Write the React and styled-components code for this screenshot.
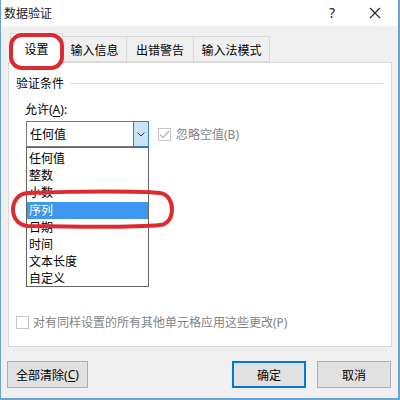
import React from "react";
import styled, { createGlobalStyle } from "styled-components";

const GlobalStyle = createGlobalStyle`
  html, body { margin: 0; padding: 0; background: #ffffff; }
  body { font-family: "Noto Sans", "Noto Sans CJK SC", sans-serif; }
  * { box-sizing: border-box; }
`;

const Window = styled.div`
  position: relative;
  width: 400px;
  height: 400px;
  background: #f0f0f0;
  border-left: 1px solid #6aa3d6;
  border-right: 2px solid #6aa3d6;
  border-bottom: 2px solid #6aa3d6;
  display: flex;
  flex-direction: column;
  color: #000;
  font-size: 12px;
`;

const TitleBar = styled.div`
  height: 26px;
  background: #ffffff;
  display: flex;
  align-items: center;
  padding-left: 3px;
`;

const Title = styled.div`
  flex: 1;
  font-size: 12px;
  color: #1a1a1a;
`;

const TitleButton = styled.div`
  width: ${(p) => p.$w}px;
  text-align: center;
  font-size: ${(p) => p.$size}px;
  color: #222;
  line-height: 26px;
  display: flex;
  align-items: center;
  justify-content: center;
`;

const TabRow = styled.div`
  display: flex;
  align-items: flex-end;
  margin-top: 7px;
  padding-left: 9px;
  height: 29px;
`;

const Tab = styled.div`
  width: ${(p) => p.$w}px;
  height: ${(p) => (p.$active ? 30 : 26)}px;
  background: ${(p) => (p.$active ? "#ffffff" : "#f0f0f0")};
  border: 1px solid #d9d9d9;
  border-bottom: ${(p) => (p.$active ? "none" : "1px solid #d9d9d9")};
  margin-left: ${(p) => (p.$first ? 0 : -1)}px;
  margin-bottom: ${(p) => (p.$active ? -1 : 0)}px;
  position: relative;
  z-index: ${(p) => (p.$active ? 2 : 1)};
  display: flex;
  align-items: center;
  justify-content: center;
  font-size: 12px;
  padding-top: ${(p) => (p.$active ? 0 : 1)}px;
`;

const Panel = styled.div`
  position: relative;
  margin: 0 6px 0 7px;
  height: 285px;
  background: #ffffff;
  border: 1px solid #d9d9d9;
  display: flex;
  flex-direction: column;
  padding: 10px 7px 0 7px;
`;

const GroupHeader = styled.div`
  display: flex;
  align-items: center;
  gap: 6px;
  height: 20px;
`;

const GroupLine = styled.div`
  flex: 1;
  height: 1px;
  background: #dcdcdc;
`;

const Label = styled.div`
  margin: 7px 0 0 9px;
  height: 20px;
  line-height: 20px;
`;

const Mn = styled.span`
  text-decoration: underline;
  text-underline-offset: 2px;
`;

const ComboRow = styled.div`
  display: flex;
  align-items: center;
  gap: 9px;
  margin: 1px 0 0 10px;
  position: relative;
`;

const Combo = styled.div`
  width: 123px;
  height: 26px;
  border: 1px solid #7a7a7a;
  background: #fff;
  display: flex;
  align-items: stretch;
`;

const ComboText = styled.div`
  flex: 1;
  padding-left: 3px;
  display: flex;
  align-items: center;
`;

const DropButton = styled.div`
  width: 16px;
  margin: -1px -1px -1px 0;
  background: #cce4f7;
  border: 1px solid #3c7fb1;
  display: flex;
  align-items: center;
  justify-content: center;
`;

const Check = styled.div`
  width: 13px;
  height: 13px;
  border: 1px solid #c5c5c5;
  background: #fff;
  display: flex;
  align-items: center;
  justify-content: center;
  flex: none;
`;

const CheckLabel = styled.span`
  color: #838383;
  margin-left: ${(p) => p.$gap}px;
`;

const CheckRow = styled.div`
  display: flex;
  align-items: center;
`;

const BottomCheckRow = styled(CheckRow)`
  margin-top: auto;
  margin-bottom: 15px;
`;

const DropList = styled.div`
  position: absolute;
  left: 17px;
  top: 84px;
  width: 123px;
  height: 140px;
  background: #fff;
  border: 1px solid #646464;
  padding-top: 2px;
  z-index: 5;
`;

const ListItem = styled.div`
  height: 17.2px;
  line-height: 17px;
  padding-left: 2px;
  background: ${(p) => (p.$selected ? "#3d97ee" : "transparent")};
  color: ${(p) => (p.$selected ? "#ffffff" : "#000")};
`;

const ButtonRow = styled.div`
  display: flex;
  align-items: center;
  margin-top: 14px;
  padding: 0 7px 0 6px;
  gap: 11px;
`;

const Button = styled.div`
  width: ${(p) => p.$w}px;
  height: 27px;
  background: #e1e1e1;
  border: ${(p) => (p.$default ? "2px solid #0078d7" : "1px solid #adadad")};
  display: flex;
  align-items: center;
  justify-content: center;
  font-size: 12px;
  margin-left: ${(p) => (p.$push ? "auto" : "0")};
`;

const Overlay = styled.svg`
  position: absolute;
  left: -1px;
  top: 0;
  pointer-events: none;
  z-index: 10;
`;

const items = ["任何值", "整数", "小数", "序列", "日期", "时间", "文本长度", "自定义"];

export default function App() {
  return (
    <>
      <GlobalStyle />
      <Window>
        <TitleBar>
          <Title>数据验证</Title>
          <TitleButton $w={40} $size={14}>?</TitleButton>
          <TitleButton $w={46} $size={18}>
            <svg width="12" height="12" viewBox="0 0 12 12">
              <path d="M1 1 L11 11 M11 1 L1 11" stroke="#222" strokeWidth="1.1" />
            </svg>
          </TitleButton>
        </TitleBar>
        <TabRow>
          <Tab $w={53} $active $first>设置</Tab>
          <Tab $w={65}>输入信息</Tab>
          <Tab $w={68}>出错警告</Tab>
          <Tab $w={77}>输入法模式</Tab>
        </TabRow>
        <Panel>
          <GroupHeader>
            <span>验证条件</span>
            <GroupLine />
          </GroupHeader>
          <Label>
            允许(<Mn>A</Mn>):
          </Label>
          <ComboRow>
            <Combo>
              <ComboText>任何值</ComboText>
              <DropButton>
                <svg width="8" height="5" viewBox="0 0 8 5">
                  <path d="M0.5 0.5 L4 4 L7.5 0.5" fill="none" stroke="#333" strokeWidth="1" />
                </svg>
              </DropButton>
            </Combo>
            <CheckRow>
              <Check>
                <svg width="11" height="9" viewBox="0 0 11 9">
                  <path d="M1 4.5 L4 7.5 L10 1" fill="none" stroke="#b8b8b8" strokeWidth="1.3" />
                </svg>
              </Check>
              <CheckLabel $gap={5}>忽略空值(B)</CheckLabel>
            </CheckRow>
          </ComboRow>
          <DropList>
            {items.map((it, i) => (
              <ListItem key={it} $selected={i === 3}>
                {it}
              </ListItem>
            ))}
          </DropList>
          <BottomCheckRow>
            <Check />
            <CheckLabel $gap={4}>对有同样设置的所有其他单元格应用这些更改(P)</CheckLabel>
          </BottomCheckRow>
        </Panel>
        <ButtonRow>
          <Button $w={81}>
            全部清除(<Mn>C</Mn>)
          </Button>
          <Button $w={74} $default $push>
            确定
          </Button>
          <Button $w={74}>取消</Button>
        </ButtonRow>
        <Overlay width="400" height="400" viewBox="0 0 400 400">
          <rect x="11" y="35" width="51" height="33" rx="11" fill="none" stroke="#dc2a31" strokeWidth="4" />
          <path
            d="M28 193 C 80 191, 140 191, 160 193 C 176 195, 176 224, 160 225 C 140 227, 80 227, 28 226 C 8 225, 8 194, 28 193 Z"
            fill="none"
            stroke="#dc2a31"
            strokeWidth="4"
          />
        </Overlay>
      </Window>
    </>
  );
}
